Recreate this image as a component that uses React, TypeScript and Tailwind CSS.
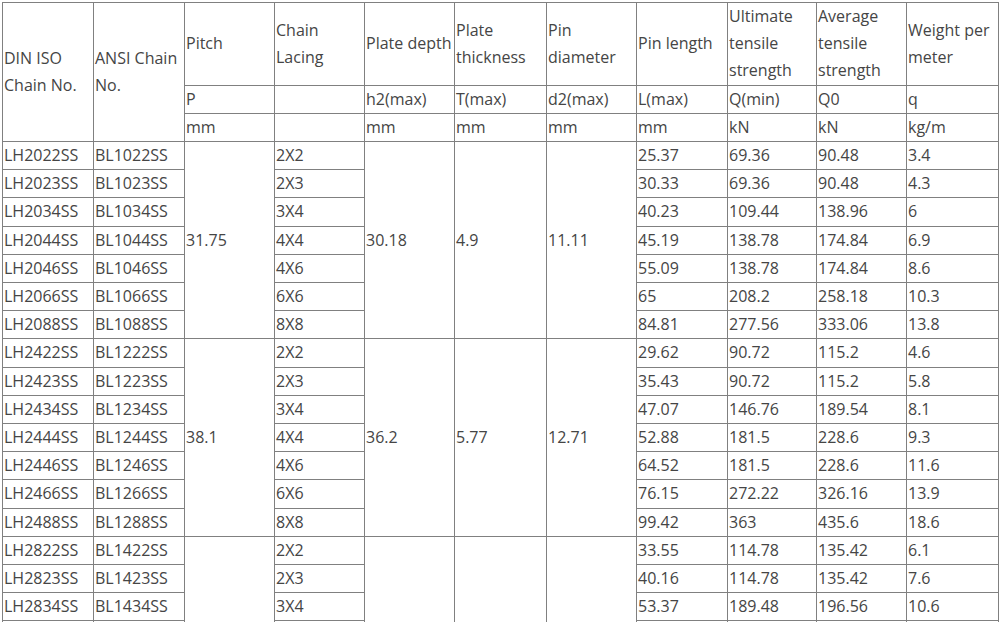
const widths = [91, 91, 90, 90, 90, 92, 90, 91, 89, 90, 92];

type Row = [string, string, string, string, string, string, string];

const groups: { spec: [string, string, string, string]; rows: Row[] }[] = [
  {
    spec: ['31.75', '30.18', '4.9', '11.11'],
    rows: [
      ['LH2022SS', 'BL1022SS', '2X2', '25.37', '69.36', '90.48', '3.4'],
      ['LH2023SS', 'BL1023SS', '2X3', '30.33', '69.36', '90.48', '4.3'],
      ['LH2034SS', 'BL1034SS', '3X4', '40.23', '109.44', '138.96', '6'],
      ['LH2044SS', 'BL1044SS', '4X4', '45.19', '138.78', '174.84', '6.9'],
      ['LH2046SS', 'BL1046SS', '4X6', '55.09', '138.78', '174.84', '8.6'],
      ['LH2066SS', 'BL1066SS', '6X6', '65', '208.2', '258.18', '10.3'],
      ['LH2088SS', 'BL1088SS', '8X8', '84.81', '277.56', '333.06', '13.8'],
    ],
  },
  {
    spec: ['38.1', '36.2', '5.77', '12.71'],
    rows: [
      ['LH2422SS', 'BL1222SS', '2X2', '29.62', '90.72', '115.2', '4.6'],
      ['LH2423SS', 'BL1223SS', '2X3', '35.43', '90.72', '115.2', '5.8'],
      ['LH2434SS', 'BL1234SS', '3X4', '47.07', '146.76', '189.54', '8.1'],
      ['LH2444SS', 'BL1244SS', '4X4', '52.88', '181.5', '228.6', '9.3'],
      ['LH2446SS', 'BL1246SS', '4X6', '64.52', '181.5', '228.6', '11.6'],
      ['LH2466SS', 'BL1266SS', '6X6', '76.15', '272.22', '326.16', '13.9'],
      ['LH2488SS', 'BL1288SS', '8X8', '99.42', '363', '435.6', '18.6'],
    ],
  },
  {
    spec: ['44.45', '42.24', '7.1', '14.29'],
    rows: [
      ['LH2822SS', 'BL1422SS', '2X2', '33.55', '114.78', '135.42', '6.1'],
      ['LH2823SS', 'BL1423SS', '2X3', '40.16', '114.78', '135.42', '7.6'],
      ['LH2834SS', 'BL1434SS', '3X4', '53.37', '189.48', '196.56', '10.6'],
      ['LH2844SS', 'BL1444SS', '4X4', '59.95', '229.32', '243.5', '12.5'],
      ['LH2846SS', 'BL1446SS', '4X6', '72.8', '229.32', '243.5', '15.8'],
      ['LH2866SS', 'BL1466SS', '6X6', '86.95', '341.82', '365.2', '18.7'],
      ['LH2888SS', 'BL1488SS', '8X8', '113.26', '455.76', '487.0', '24.7'],
    ],
  },
];

const cell = 'border border-[#808080] px-px py-0 align-middle text-left font-normal whitespace-nowrap';

export default function App() {
  return (
    <div className="bg-white min-h-screen pt-[2px] pl-[2px] text-[#454545] text-[16px] leading-[27.2px] font-['Open_Sans','Noto_Sans',sans-serif]">
      <table className="table-fixed border-collapse w-[996px]">
        <colgroup>
          {widths.map((w, i) => (
            <col key={i} style={{ width: w }} />
          ))}
        </colgroup>
        <thead>
          <tr>
            <th rowSpan={3} className={cell}>DIN ISO<br />Chain No.</th>
            <th rowSpan={3} className={cell}>ANSI Chain<br />No.</th>
            <th className={cell}>Pitch</th>
            <th className={cell}>Chain<br />Lacing</th>
            <th className={cell}>Plate depth</th>
            <th className={cell}>Plate<br />thickness</th>
            <th className={cell}>Pin<br />diameter</th>
            <th className={cell}>Pin length</th>
            <th className={cell}>Ultimate<br />tensile<br />strength</th>
            <th className={cell}>Average<br />tensile<br />strength</th>
            <th className={cell}>Weight per<br />meter</th>
          </tr>
          <tr>
            {['P', '', 'h2(max)', 'T(max)', 'd2(max)', 'L(max)', 'Q(min)', 'Q0', 'q'].map((t, i) => (
              <th key={i} className={cell}>{t}</th>
            ))}
          </tr>
          <tr>
            {['mm', '', 'mm', 'mm', 'mm', 'mm', 'kN', 'kN', 'kg/m'].map((t, i) => (
              <th key={i} className={cell}>{t}</th>
            ))}
          </tr>
        </thead>
        <tbody>
          {groups.map((g) =>
            g.rows.map((r, i) => (
              <tr key={r[0]}>
                <td className={cell}>{r[0]}</td>
                <td className={cell}>{r[1]}</td>
                {i === 0 && <td rowSpan={g.rows.length} className={cell}>{g.spec[0]}</td>}
                <td className={cell}>{r[2]}</td>
                {i === 0 && <td rowSpan={g.rows.length} className={cell}>{g.spec[1]}</td>}
                {i === 0 && <td rowSpan={g.rows.length} className={cell}>{g.spec[2]}</td>}
                {i === 0 && <td rowSpan={g.rows.length} className={cell}>{g.spec[3]}</td>}
                <td className={cell}>{r[3]}</td>
                <td className={cell}>{r[4]}</td>
                <td className={cell}>{r[5]}</td>
                <td className={cell}>{r[6]}</td>
              </tr>
            ))
          )}
        </tbody>
      </table>
    </div>
  );
}
